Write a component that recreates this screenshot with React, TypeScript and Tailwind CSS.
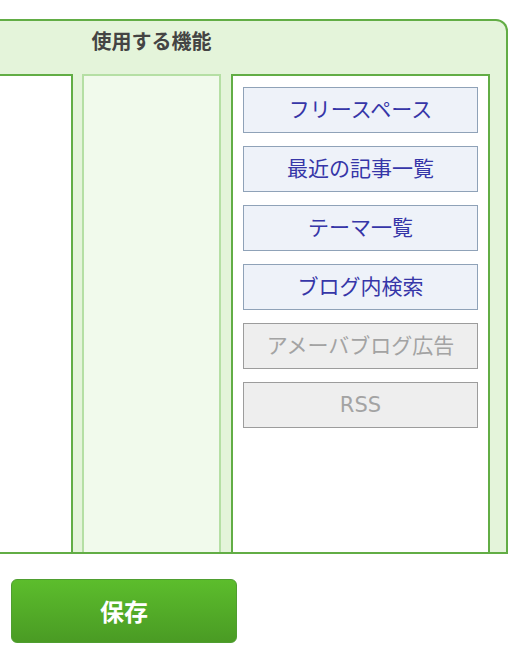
import React from "react";

const features = [
  { name: "フリースペース", enabled: true },
  { name: "最近の記事一覧", enabled: true },
  { name: "テーマ一覧", enabled: true },
  { name: "ブログ内検索", enabled: true },
  { name: "アメーバブログ広告", enabled: false },
  { name: "RSS", enabled: false },
];

const font = { fontFamily: '"Noto Sans CJK JP", "Noto Sans", sans-serif' };
const btnFont = { fontFamily: '"DejaVu Sans", "Noto Sans CJK JP", sans-serif' };

export default function App() {
  return (
    <div className="w-[528px] h-[652px] bg-white pt-[19px] overflow-hidden" style={font}>
      <div className="w-[508px] border-2 border-l-0 border-[#62ad45] rounded-tr-[12px] bg-[#e4f4da]">
        {/* header */}
        <div className="h-[53px] flex">
          <div className="w-[221px] pl-[82px] pt-[6px] text-center">
            <span className="text-[20px] leading-[28px] font-bold text-[#444]">使用する機能</span>
          </div>
        </div>

        {/* columns */}
        <div className="flex h-[478px]">
          <div className="w-[73px] border-t-2 border-r-2 border-[#62ad45] bg-white" />
          <div className="ml-[9px] w-[139px] border-2 border-b-0 border-[#b5dfa4] bg-[#f1faec]" />
          <div className="ml-[10px] w-[259px] border-2 border-b-0 border-[#62ad45] bg-white px-[10px] pt-[11px] flex flex-col gap-[13px]">
            {features.map((f) => (
              <div
                key={f.name}
                style={btnFont}
                className={
                  f.enabled
                    ? "h-[46px] border border-[#8fa2b8] bg-[#eef2f9] text-[#3636a8] text-[21px] leading-none flex items-center justify-center"
                    : "h-[46px] border border-[#9c9c9c] bg-[#eeeeee] text-[#a3a3a3] text-[21px] leading-none flex items-center justify-center"
                }
              >
                {f.name}
              </div>
            ))}
          </div>
        </div>
      </div>

      <button className="mt-[25px] ml-[11px] w-[226px] h-[64px] rounded-[6px] border border-[#4f9e30] bg-gradient-to-b from-[#5cbd2c] to-[#4a9b24] text-white text-[24px] font-bold">
        保存
      </button>
    </div>
  );
}
